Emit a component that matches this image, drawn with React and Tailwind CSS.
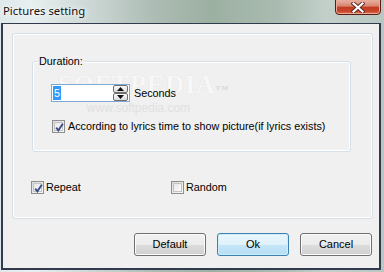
import React from 'react';

const CheckBox = ({ checked }) => (
    <span className="w-[13px] h-[13px] shrink-0 border border-[#8f8f8f] bg-[linear-gradient(135deg,#dcdcdc,#f7f7f7)] p-[1px] flex">
        <span className="flex-1 border border-[#c3c3c3] bg-[linear-gradient(135deg,#e6e6e6,#fdfdfd)] relative">
            {checked && (
                <svg width="11" height="11" viewBox="0 0 11 11" className="absolute -left-[1px] -top-[1px]">
                    <path d="M2.2 5.6 L4.4 8.4 L8.8 1.8" fill="none" stroke="#3a4c8c" strokeWidth="1.9" />
                </svg>
            )}
        </span>
    </span>
);

const SpinButton = ({ up }) => (
    <span className="h-[8px] w-[15px] rounded-[2px] border border-[#6f6f6f] bg-[linear-gradient(#fbfbfb,#dcdcdc)] flex items-center justify-center">
        <svg width="7" height="4" viewBox="0 0 7 4">
            <path d={up ? 'M0 4 L3.5 0 L7 4 Z' : 'M0 0 L3.5 4 L7 0 Z'} fill="#111" />
        </svg>
    </span>
);

const Button = ({ label, primary }) => (
    <button
        className={
            primary
                ? 'w-[72px] h-[23px] rounded-[3px] border border-[#3c7fb1] bg-[linear-gradient(#eaf6fd_0%,#dff2fc_50%,#c6e6f8_50%,#b5def5_100%)] shadow-[inset_0_0_0_1px_#cdeefd] text-[11px] text-black'
                : 'w-[72px] h-[23px] rounded-[3px] border border-[#707070] bg-[linear-gradient(#f2f2f2_0%,#ebebeb_50%,#dddddd_50%,#cfcfcf_100%)] shadow-[inset_0_0_0_1px_#fbfbfb] text-[11px] text-black'
        }
    >
        {label}
    </button>
);

export default function App() {
    return (
        <div className="w-[384px] h-[272px] flex flex-col overflow-hidden bg-[linear-gradient(90deg,#dfe8ea_0%,#e9eff0_8%,#c9d5d2_25%,#adbcb4_40%,#9cb0a2_55%,#a9bbb0_72%,#c3d0ca_85%,#b9c7c2_100%)] font-['Liberation_Sans',Arial,sans-serif]">
            {/* title bar */}
            <div className="h-[23px] shrink-0 flex items-start justify-between pl-[3px] pr-[3px]">
                <span className="mt-[3px] text-[11.3px] leading-[15px] text-[#111] font-['Noto_Sans',sans-serif] [text-shadow:0_0_6px_#ffffff,0_0_3px_#ffffff]">
                    Pictures setting
                </span>
                <div className="w-[46px] h-[16px] -mt-[1px] rounded-b-[4px] border border-[#5e1b12] bg-[linear-gradient(#e8b4a6_0%,#d7816c_45%,#c23a22_50%,#c9452b_80%,#de7a55_100%)] shadow-[inset_0_0_0_1px_#eba998] flex items-center justify-center">
                    <svg width="14" height="11" viewBox="0 0 14 11">
                        <path d="M2.5 1.5 L11.5 9.5 M11.5 1.5 L2.5 9.5" stroke="#5a2a20" strokeWidth="4" strokeLinecap="square" />
                        <path d="M2.5 1.5 L11.5 9.5 M11.5 1.5 L2.5 9.5" stroke="#ffffff" strokeWidth="2.2" strokeLinecap="square" />
                    </svg>
                </div>
            </div>

            {/* client area */}
            <div className="relative ml-[1px] mr-[3px] h-[247px] border-t border-x-2 border-b-2 border-[#323b4e] bg-[#f0f0f0] flex flex-col pt-[9px] pl-[9px] pr-[6px] text-[10.8px] text-black">
                {/* watermark */}
                <div className="absolute left-[55px] top-[48px] pointer-events-none flex flex-col items-center text-[#f7f7f7] [text-shadow:0_0_1px_#dcdcdc]">
                    <span className="text-[26px] leading-[26px] font-bold font-['Liberation_Serif',serif] tracking-[1px]">SOFTPEDIA<sup className="text-[7px] text-[#dedede]">TM</sup></span>
                    <span className="mt-[4px] text-[12px] leading-[12px] text-[#e0e0e0] [text-shadow:none] -ml-[10px]">www.softpedia.com</span>
                </div>

                {/* outer frame */}
                <div className="relative h-[186px] rounded-[3px] border border-[#d5dfe5] shadow-[inset_0_0_0_1px_#ffffff] flex flex-col">
                    <div className="relative mt-[27px] ml-[19px] mr-[21px] h-[91px] rounded-[3px] border border-[#d5dfe5] shadow-[inset_0_0_0_1px_#ffffff] pt-[22px] pl-[18px] flex flex-col">
                        <span className="absolute left-[5px] -top-[8px] bg-[#f0f0f0] px-[1px] leading-[14px]">Duration:</span>

                        <div className="flex items-center gap-[4px]">
                            <div className="w-[79px] h-[18px] border border-[#7fa9d3] bg-white flex items-center pl-[1px] pr-[1px]">
                                <span className="bg-[#3399ff] text-white leading-[14px] px-[1px]">5</span>
                                <span className="flex-1" />
                                <span className="flex flex-col">
                                    <SpinButton up />
                                    <SpinButton />
                                </span>
                            </div>
                            <span>Seconds</span>
                        </div>

                        <label className="mt-[16px] flex items-center gap-[2px] ml-[1px]">
                            <CheckBox checked />
                            <span className="ml-[1px]">According to lyrics time to show picture(if lyrics exists)</span>
                        </label>
                    </div>

                    <div className="mt-[27px] ml-[18px] flex items-center">
                        <label className="w-[140px] flex items-center gap-[2px]">
                            <CheckBox checked />
                            <span>Repeat</span>
                        </label>
                        <label className="flex items-center gap-[2px]">
                            <CheckBox />
                            <span>Random</span>
                        </label>
                    </div>
                </div>

                {/* buttons */}
                <div className="mt-[14px] flex justify-end gap-[11px] pr-[1px]">
                    <Button label="Default" />
                    <Button label="Ok" primary />
                    <Button label="Cancel" />
                </div>
            </div>
        </div>
    );
}
